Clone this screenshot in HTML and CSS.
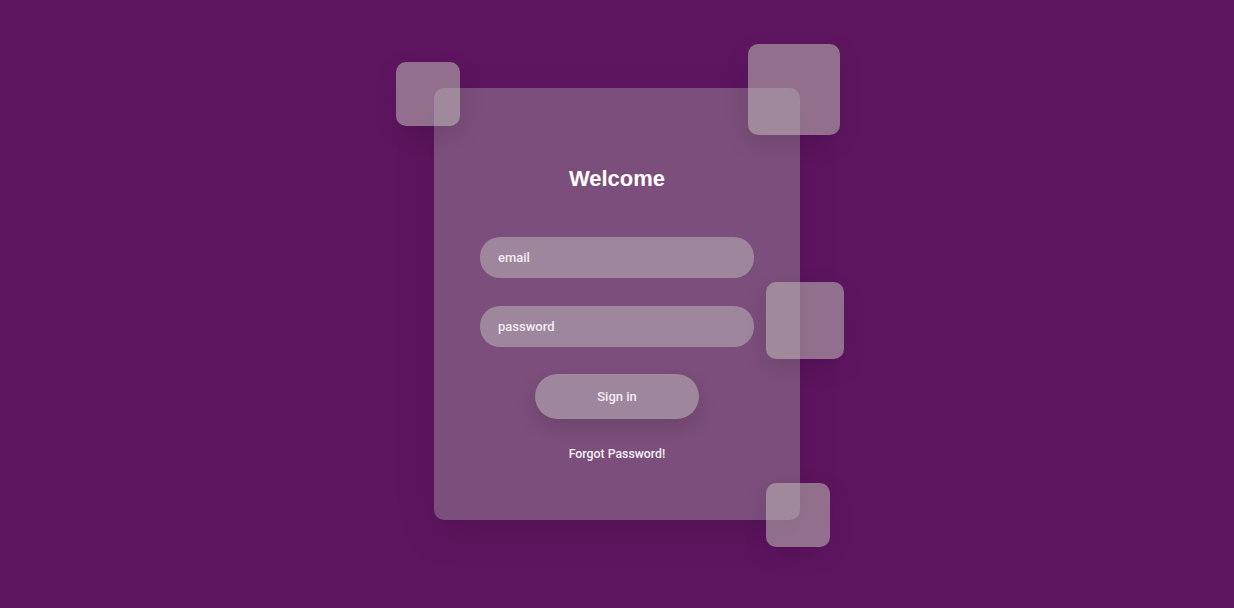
FILE: index.html
```html
<!DOCTYPE html>
<html>
<head>
<meta charset="utf-8">
<link rel="stylesheet" href="styles.css">
</head>
<body>
<div class="stage">
  <div class="square sq-tl"></div>
  <div class="square sq-tr"></div>
  <div class="square sq-mr"></div>
  <div class="square sq-br"></div>
  <form class="card">
    <h1 class="title">Welcome</h1>
    <div class="field">email</div>
    <div class="field">password</div>
    <button type="button" class="btn">Sign in</button>
    <a class="forgot">Forgot Password!</a>
  </form>
</div>
</body>
</html>
```

FILE: styles.css
```css
html, body {
  margin: 0;
  height: 100%;
}
body {
  background: #5e1560;
  display: flex;
  align-items: center;
  justify-content: center;
  font-family: Roboto, "Liberation Sans", Arial, sans-serif;
}
.stage {
  position: relative;
  width: 366px;
  height: 432px;
}
.card {
  box-sizing: border-box;
  width: 366px;
  height: 432px;
  margin: 0;
  background: #7b4e7b;
  border-radius: 10px;
  box-shadow: 0 12px 40px rgba(0, 0, 0, 0.12);
  display: flex;
  flex-direction: column;
  align-items: center;
  padding-top: 78px;
  position: relative;
  z-index: 1;
}
.title {
  margin: 0;
  font-family: "Liberation Sans", Arial, sans-serif;
  font-weight: 700;
  font-size: 22px;
  line-height: 26px;
  color: #ffffff;
}
.field {
  box-sizing: border-box;
  width: 274px;
  height: 41px;
  border-radius: 20px;
  background: #9e879c;
  color: #f3ecf3;
  font-size: 13px;
  font-weight: 500;
  line-height: 41px;
  padding-left: 18px;
  margin-top: 45px;
}
.field + .field {
  margin-top: 28px;
}
.btn {
  margin-top: 27px;
  width: 164px;
  height: 45px;
  border: 0;
  border-radius: 23px;
  background: #9e879c;
  color: #f3ecf3;
  font-family: Roboto, "Liberation Sans", Arial, sans-serif;
  font-size: 13px;
  font-weight: 500;
  box-shadow: 0 8px 20px rgba(0, 0, 0, 0.12);
}
.forgot {
  margin-top: 27px;
  color: #f6eef6;
  font-size: 12.3px;
  font-weight: 500;
  line-height: 16px;
}
.square {
  position: absolute;
  background: rgba(190, 186, 181, 0.55);
  border-radius: 10px;
  box-shadow: 0 8px 24px rgba(0, 0, 0, 0.1);
  z-index: 2;
}
.sq-tl { left: -38px; top: -26px; width: 64px; height: 64px; }
.sq-tr { left: 314px; top: -44px; width: 92px; height: 91px; }
.sq-mr { left: 332px; top: 194px; width: 78px; height: 77px; }
.sq-br { left: 332px; top: 395px; width: 64px; height: 64px; }
```
